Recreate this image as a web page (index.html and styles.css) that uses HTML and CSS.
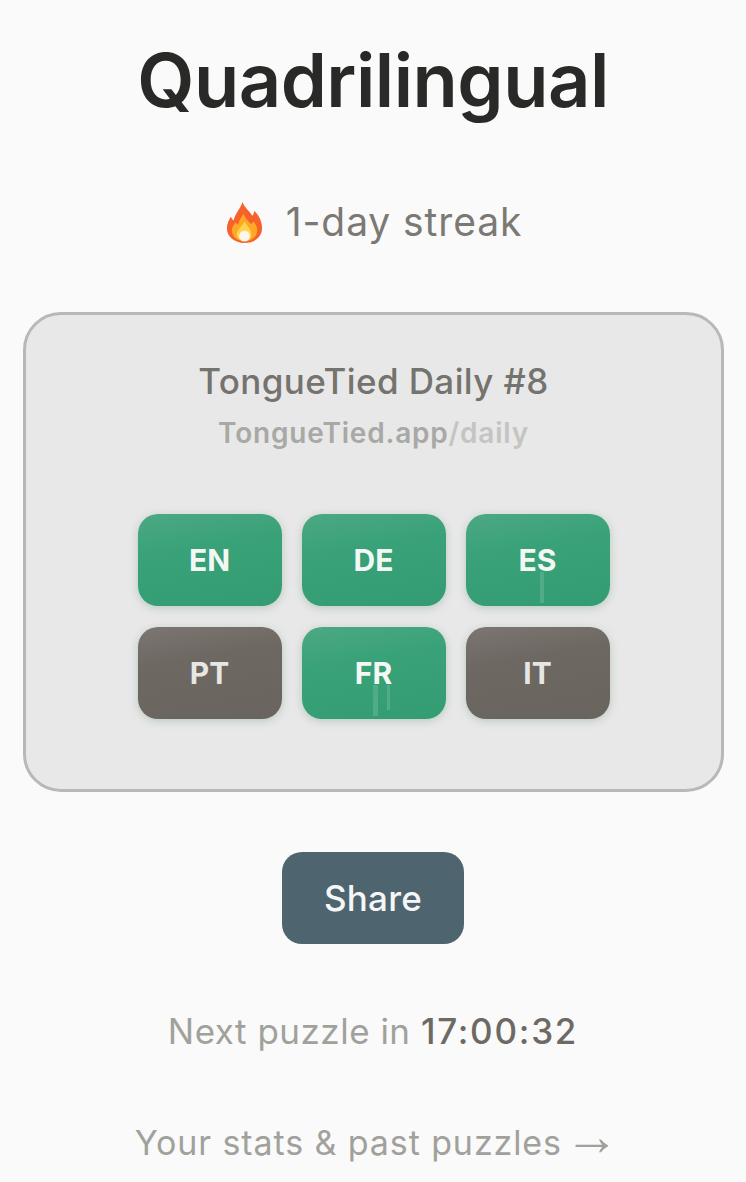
FILE: index.html
```html
<!DOCTYPE html>
<html lang="en">
<head>
    <meta charset="UTF-8">
    <meta name="viewport" content="width=device-width, initial-scale=1.0">
    <title>Quadrilingual</title>
    <link rel="stylesheet" href="styles.css">
</head>
<body>
    <main class="page">
        <h1 class="title">Quadrilingual</h1>
        <p class="streak">
            <svg class="flame" viewBox="0 0 36 42" aria-hidden="true">
                <path fill="#f6622a" d="M16 0c2 6 7 9 10 14 1-1 2-3 2-5 5 5 8 11 8 18 0 9-8 15-18 15S0 36 0 27c0-5 2-9 4-12 1 2 2 3 3 4C8 12 14 7 16 0z"/>
                <path fill="#ffa726" d="M17 12c1 4 4 6 7 10 1 1 2 0 3-2 3 3 4 6 4 9 0 7-6 11-13 11S5 36 5 29c0-3 2-6 4-8 1 1 2 2 3 2 0-4 3-7 5-11z"/>
                <path fill="#ffd54f" d="M18 20c1 3 7 7 7 13 0 4-3 7-7 7s-8-3-8-7c0-5 6-8 8-13z"/>
                <circle fill="#fdf6ea" cx="18" cy="35" r="5.5"/>
            </svg>
            <span>1-day streak</span>
        </p>

        <section class="card">
            <h2 class="card-title">TongueTied Daily #8</h2>
            <p class="card-url">TongueTied.app<span class="card-url-path">/daily</span></p>
            <div class="tiles">
                <div class="tile tile-hit">EN</div>
                <div class="tile tile-hit">DE</div>
                <div class="tile tile-hit">ES<span class="tick tick-es"></span></div>
                <div class="tile tile-miss">PT</div>
                <div class="tile tile-hit">FR<span class="tick tick-fr1"></span><span class="tick tick-fr2"></span></div>
                <div class="tile tile-miss">IT</div>
            </div>
        </section>

        <button class="share" type="button">Share</button>
        <p class="next">Next puzzle in <strong class="timer">17:00:32</strong></p>
        <a class="stats" href="#">Your stats &amp; past puzzles <span class="arrow">→</span></a>
    </main>
</body>
</html>
```

FILE: styles.css
```css
body {
    margin: 0;
    background: #fafafa;
    color: #292927;
    font-family: 'Inter', 'Liberation Sans', sans-serif;
}
.page {
    height: 1182px;
    overflow: hidden;
    box-sizing: border-box;
    padding: 0 23px;
    display: flex;
    flex-direction: column;
    align-items: center;
}
.title {
    margin: 35px 0 0;
    font-size: 74px;
    line-height: 90px;
    font-weight: 600;
    letter-spacing: -0.5px;
}
.streak {
    margin: 73px 0 0 2px;
    display: flex;
    align-items: center;
    gap: 23px;
    font-size: 39px;
    line-height: 48px;
    letter-spacing: 0.9px;
    color: #7a7974;
}
.flame {
    width: 37px;
    height: 41px;
}
.card {
    align-self: flex-start;
    margin-top: 66px;
    width: 701px;
    height: 480px;
    box-sizing: border-box;
    border: 3px solid #b5bab5;
    border-radius: 38px;
    background: #e8e8e8;
    display: flex;
    flex-direction: column;
    align-items: center;
}
.card-title {
    margin: 43px 0 0;
    font-size: 35px;
    line-height: 46px;
    font-weight: 500;
    letter-spacing: 0.4px;
    color: #74736e;
}
.card-url {
    margin: 10px 0 0;
    font-size: 28px;
    line-height: 38px;
    font-weight: 600;
    letter-spacing: 0.8px;
    color: #a8a8a4;
}
.card-url-path {
    color: #c3c5c1;
}
.tiles {
    margin-top: 62px;
    display: grid;
    grid-template-columns: repeat(3, 144px);
    grid-auto-rows: 92px;
    column-gap: 20px;
    row-gap: 21px;
}
.tile {
    position: relative;
    display: flex;
    align-items: center;
    justify-content: center;
    border-radius: 20px;
    font-size: 30px;
    font-weight: 700;
    box-shadow: 0 2px 9px rgba(130, 165, 145, 0.45);
}
.tile-hit {
    color: #f4f8f5;
    background: linear-gradient(170deg, #4ca883 0%, #3aa279 35%, #339c72 100%);
}
.tile-miss {
    color: #e6e6e3;
    background: linear-gradient(170deg, #7b7671 0%, #6e6863 35%, #6a645f 100%);
}
.tick {
    position: absolute;
    top: 58px;
    width: 4px;
    height: 31px;
    background: #52ab87;
}
.tick-es { left: 74px; }
.tick-fr1 { left: 71px; width: 5px; }
.tick-fr2 { left: 85px; width: 3px; height: 25px; }
.share {
    margin-top: 60px;
    width: 182px;
    height: 92px;
    border: none;
    border-radius: 20px;
    background: #4e646e;
    color: #f5f6f5;
    font-family: inherit;
    font-size: 35px;
    font-weight: 500;
    letter-spacing: 0.2px;
}
.next {
    margin: 64px 0 0;
    font-size: 35px;
    line-height: 46px;
    letter-spacing: 0.5px;
    color: #a1a19c;
}
.timer {
    font-weight: 500;
    letter-spacing: 1.75px;
    color: #6d6964;
}
.stats {
    margin: 66px 0 0 9px;
    font-size: 34px;
    line-height: 46px;
    letter-spacing: 0.9px;
    color: #a1a19c;
    text-decoration: none;
}
.arrow {
    margin-left: -8px;
    font-family: 'Liberation Sans', sans-serif;
    font-size: 55px;
    line-height: 1px;
}
```
